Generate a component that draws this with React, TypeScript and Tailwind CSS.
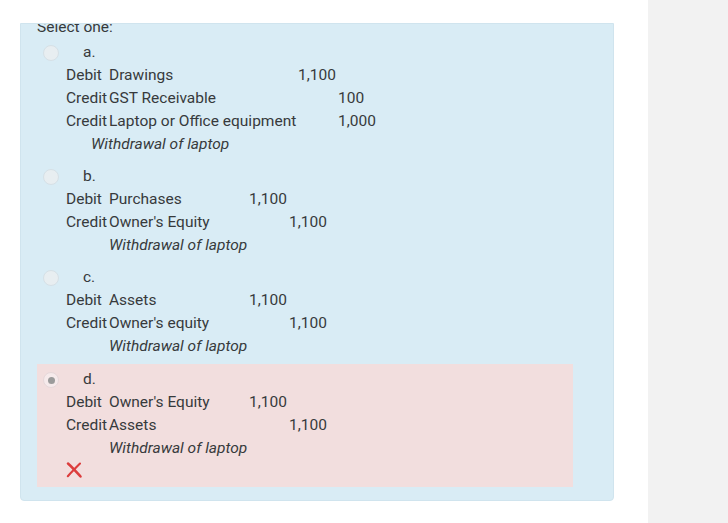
import React from 'react';

type Row = { side: 'Debit' | 'Credit'; account: string; debit?: string; credit?: string };

interface Answer {
    letter: string;
    rows: Row[];
    accountWidth: string;
    noteIndent: string;
    selected?: boolean;
}

const answers: Answer[] = [
    {
        letter: 'a.',
        accountWidth: 'w-[189px]',
        noteIndent: 'pl-[25px]',
        rows: [
            { side: 'Debit', account: 'Drawings', debit: '1,100' },
            { side: 'Credit', account: 'GST Receivable', credit: '100' },
            { side: 'Credit', account: 'Laptop or Office equipment', credit: '1,000' },
        ],
    },
    {
        letter: 'b.',
        accountWidth: 'w-[140px]',
        noteIndent: 'pl-[43px]',
        rows: [
            { side: 'Debit', account: 'Purchases', debit: '1,100' },
            { side: 'Credit', account: "Owner's Equity", credit: '1,100' },
        ],
    },
    {
        letter: 'c.',
        accountWidth: 'w-[140px]',
        noteIndent: 'pl-[43px]',
        rows: [
            { side: 'Debit', account: 'Assets', debit: '1,100' },
            { side: 'Credit', account: "Owner's equity", credit: '1,100' },
        ],
    },
    {
        letter: 'd.',
        accountWidth: 'w-[140px]',
        noteIndent: 'pl-[43px]',
        selected: true,
        rows: [
            { side: 'Debit', account: "Owner's Equity", debit: '1,100' },
            { side: 'Credit', account: 'Assets', credit: '1,100' },
        ],
    },
];

function Radio({ checked }: { checked?: boolean }) {
    return checked ? (
        <span className="ml-[1px] flex h-[16px] w-[16px] items-center justify-center rounded-full border border-[#e6d8da] bg-[#f6eaeb]">
            <span className="h-[7px] w-[7px] rounded-full bg-[#9b9b9b]" />
        </span>
    ) : (
        <span className="ml-[1px] block h-[16px] w-[16px] rounded-full border border-[#d6e0e6] bg-[#e8eef1]" />
    );
}

function WrongMark() {
    return (
        <svg width="16" height="16" viewBox="0 0 16 16">
            <path d="M2 1.5 C6 5 10 9.5 14.5 14.5" stroke="#dc3d3d" strokeWidth="2.5" strokeLinecap="round" fill="none" />
            <path d="M14 1.5 C10 5.5 6 9.5 1.8 14.2" stroke="#dc3d3d" strokeWidth="2.1" strokeLinecap="round" fill="none" />
        </svg>
    );
}

function AnswerBlock({ answer }: { answer: Answer }) {
    return (
        <div className={`mt-[1px] pl-[5px] ${answer.selected ? 'w-[536px] bg-[#f2dede] pt-[5px] pb-[3px]' : 'py-[4px]'}`}>
            <div className="flex h-[22px] items-center">
                <Radio checked={answer.selected} />
                <span className="ml-[24px]">{answer.letter}</span>
            </div>
            <div className="pl-[24px]">
                {answer.rows.map((row, i) => (
                    <div key={i} className="flex h-[23px] items-center whitespace-nowrap">
                        <span className="w-[43px]">{row.side}</span>
                        <span className={answer.accountWidth}>{row.account}</span>
                        <span className="w-[40px]">{row.debit ?? ''}</span>
                        <span>{row.credit ?? ''}</span>
                    </div>
                ))}
                <div className={`flex h-[24px] items-center italic ${answer.noteIndent}`}>Withdrawal of laptop</div>
                {answer.selected && (
                    <div className="flex h-[19px] items-center pb-[1px]">
                        <WrongMark />
                    </div>
                )}
                {answer.selected && <div className="h-[4px]" />}
            </div>
        </div>
    );
}

export default function App() {
    return (
        <div className="flex h-[523px] w-[728px] overflow-hidden bg-white font-['Roboto',sans-serif] text-[15.5px] text-[#373a3c]">
            <div className="w-[648px] pl-[20px] pt-[23px]">
                <div className="h-[478px] w-[594px] overflow-hidden rounded-b-[4px] border border-[#d0e4ee] bg-[#d9ecf5] pl-[16px]">
                    <div className="-mt-[6px] flex h-[19px] items-center">Select one:</div>
                    {answers.map((a) => (
                        <AnswerBlock key={a.letter} answer={a} />
                    ))}
                </div>
            </div>
            <div className="flex-1 bg-[#f2f2f2]" />
        </div>
    );
}
